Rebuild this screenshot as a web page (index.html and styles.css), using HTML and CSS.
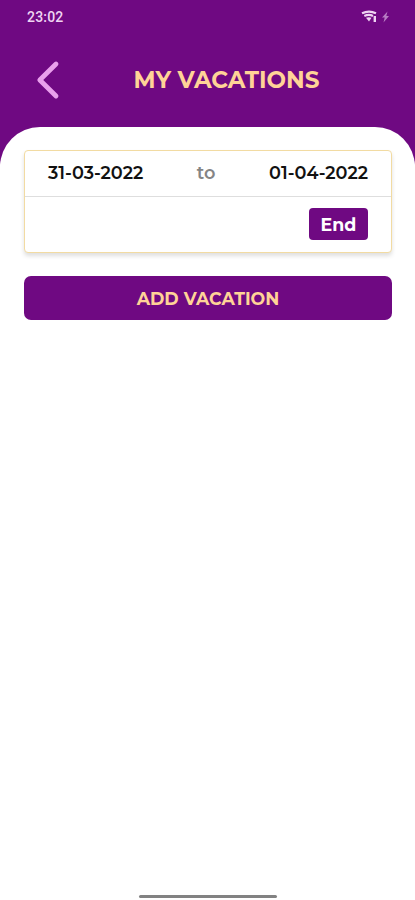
FILE: index.html
```html
<!DOCTYPE html>
<html lang="en">
<head>
<meta charset="utf-8">
<title>My Vacations</title>
<link rel="stylesheet" href="styles.css">
</head>
<body>
<div class="screen">
  <div class="status">
    <span class="time">23:02</span>
    <svg class="status-icons" width="30" height="16" viewBox="0 0 30 16" fill="none">
      <path d="M1 4.3Q8 1 15 4.3M3.3 7Q8 4.8 12 7" stroke="#efd5f3" stroke-width="2.2"/>
      <path d="M5 8.8Q8 7.8 10.5 8.8L8 12.5Z" fill="#efd5f3"/>
      <path d="M13.8 7v6" stroke="#efd5f3" stroke-width="2.4"/>
      <path d="M26.5 2.5L21 8.5h2.7l-1.2 5 5.5-6.5h-2.7z" fill="#b77cc3"/>
    </svg>
  </div>
  <header class="header">
    <svg class="back" width="24" height="40" viewBox="0 0 24 40" fill="none">
      <path d="M20 4L3.8 20L20 36" stroke="#eaa0ed" stroke-width="4.8" stroke-linecap="round" stroke-linejoin="round"/>
    </svg>
    <h1 class="title">MY VACATIONS</h1>
  </header>
  <main class="sheet">
    <section class="card">
      <div class="dates">
        <span class="date">31-03-2022</span>
        <span class="to">to</span>
        <span class="date">01-04-2022</span>
      </div>
      <div class="actions"><button class="end">End</button></div>
    </section>
    <button class="add">ADD VACATION</button>
  </main>
  <div class="home"></div>
</div>
</body>
</html>
```
FILE: styles.css
```css
* { box-sizing: border-box; }
body { margin: 0; font-family: Montserrat, Inter, sans-serif; }
button { border: 0; padding: 0; font-family: inherit; }
.screen {
  height: 900px;
  display: flex;
  flex-direction: column;
  align-items: center;
  background: linear-gradient(#6f0982 160px, #fff 165px);
}
.status {
  width: 100%;
  height: 34px;
  padding: 0 24px 0 27px;
  display: flex;
  justify-content: space-between;
  align-items: center;
}
.time { color: #efd5f3; font: 500 14px/34px Roboto, sans-serif; letter-spacing: .2px; }
.header {
  width: 100%;
  height: 93px;
  padding: 0 36px 1px;
  display: grid;
  grid-template-columns: 24px 1fr;
  align-items: center;
}
.title {
  margin: 0 0 0 14px;
  text-align: center;
  white-space: nowrap;
  color: #ffd397;
  font-size: 23.1px;
  line-height: 28px;
  font-weight: 700;
}
.sheet {
  width: 100%;
  flex: 1;
  padding: 23px 23px 0 24px;
  background: #fff;
  border-radius: 40px 40px 0 0;
}
.card {
  height: 103px;
  border: 1px solid #f2dba2;
  border-radius: 4px;
  background: #fff;
  box-shadow: 0 3px 4px rgba(0, 0, 0, .13);
}
.dates {
  height: 46px;
  padding: 0 23px;
  display: flex;
  justify-content: space-between;
  align-items: center;
  border-bottom: 1px solid #dedede;
}
.date { font-size: 17.7px; line-height: 22px; padding-bottom: 1px; font-weight: 600; color: #111; }
.to { font-size: 17.7px; line-height: 22px; padding-bottom: 1px; font-weight: 600; color: #858585; }
.actions { height: 54px; padding-right: 23px; display: flex; justify-content: flex-end; align-items: center; }
.end {
  width: 59px;
  height: 32px;
  border-radius: 4px;
  background: #6f0982;
  color: #fff;
  font-size: 17.4px;
  font-weight: 700;
}
.add {
  width: 100%;
  height: 44px;
  margin-top: 23px;
  display: block;
  border-radius: 7px;
  background: #6f0982;
  color: #ffd397;
  font-size: 17.4px;
  font-weight: 700;
}
.home { width: 138px; height: 3px; margin-bottom: 2px; border-radius: 2px; background: #828282; }
```
